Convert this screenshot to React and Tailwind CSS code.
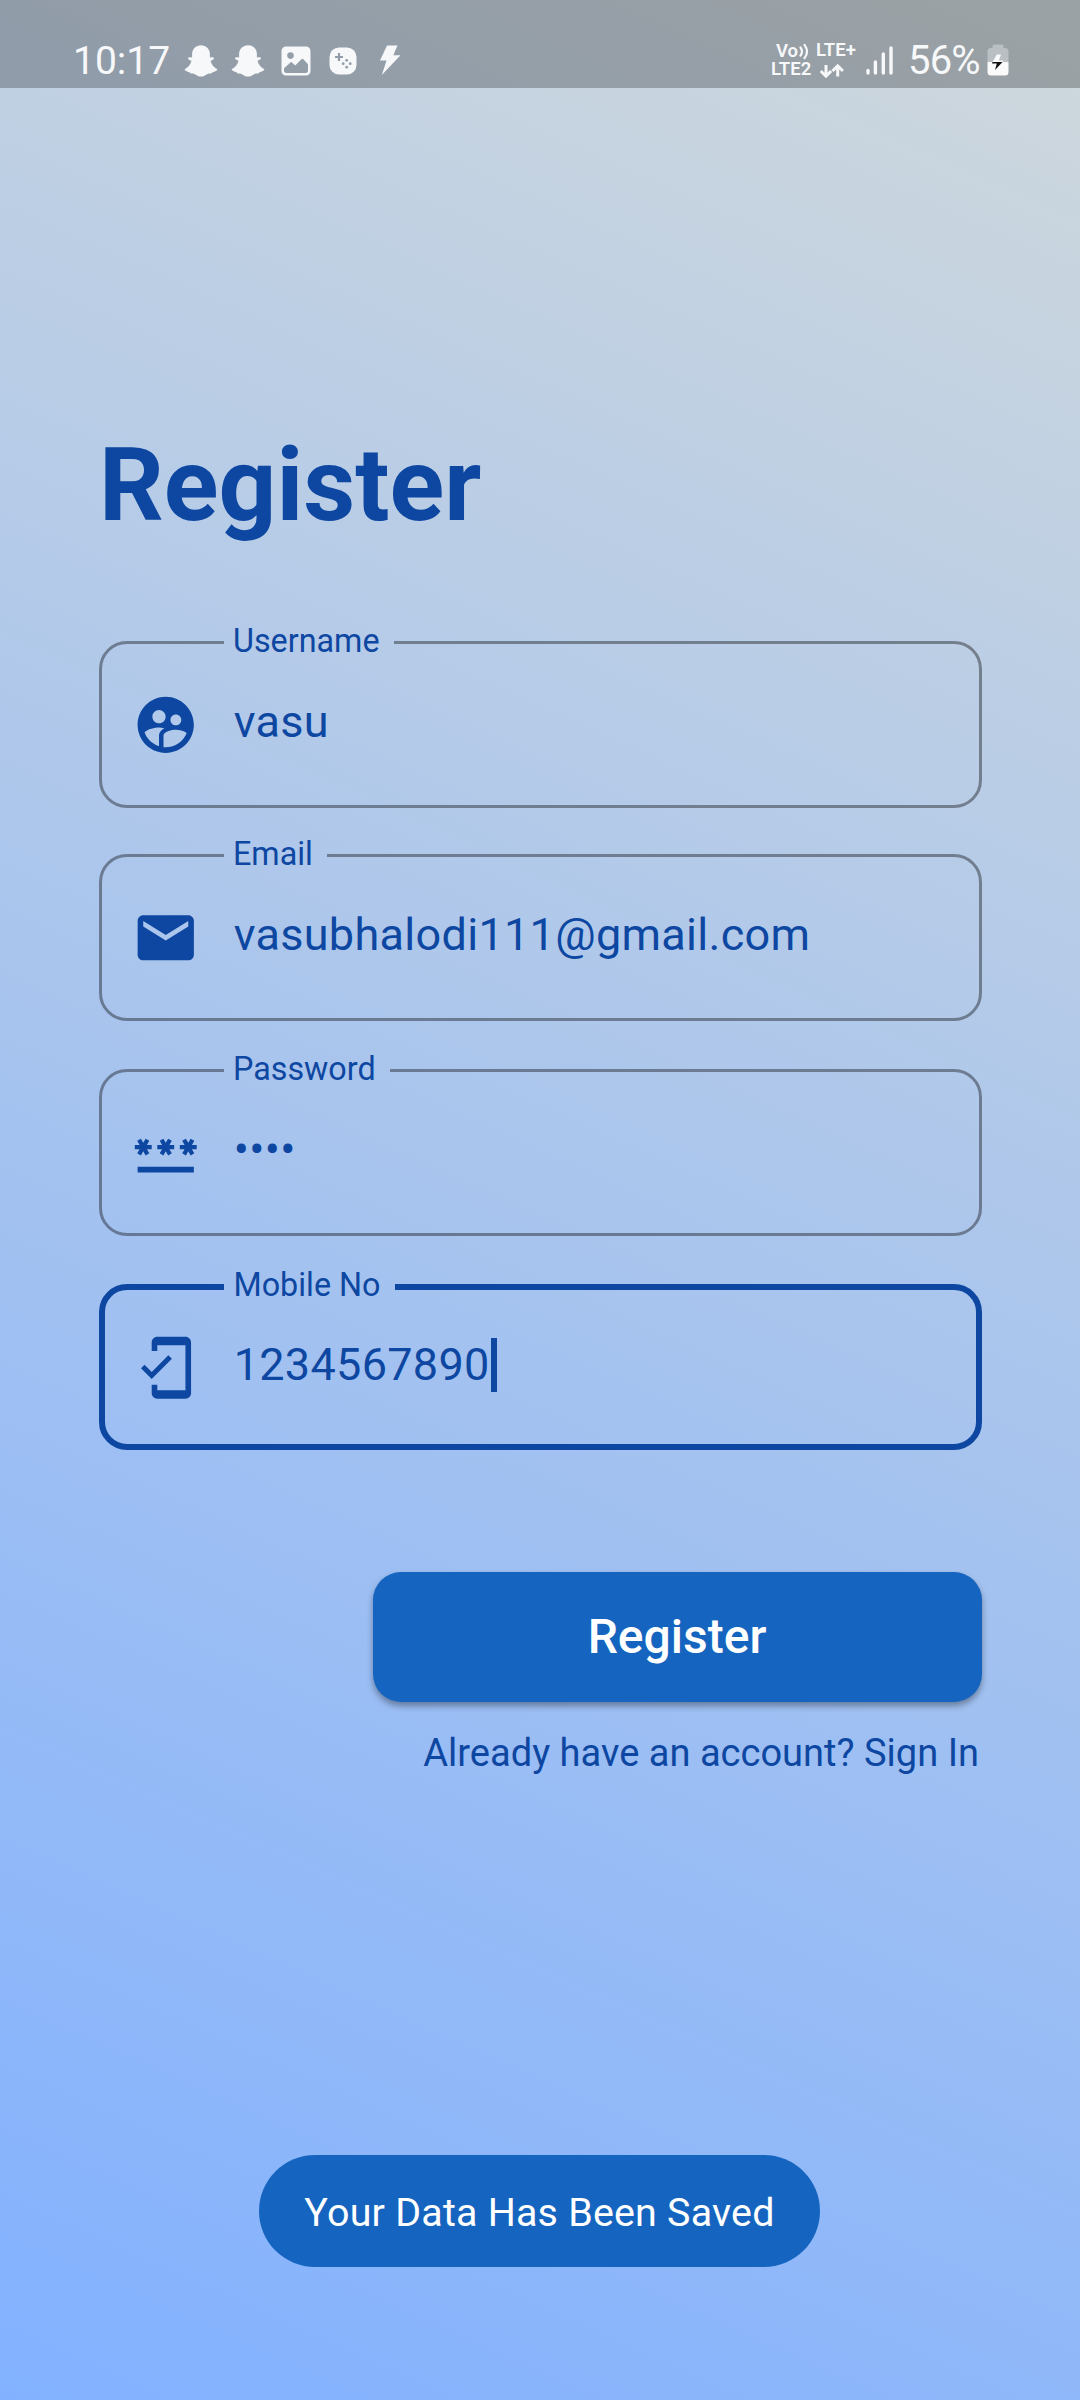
import { MdSupervisedUserCircle, MdEmail, MdPassword, MdMobileFriendly } from "react-icons/md";

function Ghost() {
  return (
    <svg viewBox="0 0 34 33" className="h-[33px] w-[34px] shrink-0" fill="currentColor">
      <path d="M17 0.300c5 0 8.900 3.600 8.900 8.700v3.500c1.500-.2 3.400-.4 4 .4.500 1.400-2 2.300-3.400 2.900 1 3.800 3.700 7.100 6.800 8.400.5 1-2.500 2.400-4.700 3-.6.200-.6 1.100-1.600 1.300-1.300.1-2.500-.1-3.900.7-1.700 1.100-3.200 2.400-6.100 2.400s-4.400-1.300-6.100-2.400c-1.400-.8-2.600-.6-3.900-.7-1-.2-1-1.100-1.600-1.300-2.200-.6-5.200-2-4.700-3 3.100-1.300 5.800-4.600 6.800-8.400-1.400-.6-3.900-1.500-3.400-2.900.6-.8 2.500-.6 4-.4V9C8.100 3.900 12 .3 17 .3z" />
    </svg>
  );
}

function Picture() {
  return (
    <svg viewBox="0 0 30 30" className="h-[30px] w-[30px] shrink-0" fill="currentColor" fillRule="evenodd">
      <path d="M5 0.500h20a4.500 4.500 0 0 1 4.500 4.500v20a4.500 4.500 0 0 1-4.500 4.500H5A4.500 4.500 0 0 1 .5 25V5A4.500 4.500 0 0 1 5 .5zM9.500 6.300a3.300 3.300 0 1 0 0 6.600 3.300 3.300 0 0 0 0-6.600zM3 22.300v2.200A2.500 2.500 0 0 0 5.500 27h19a2.500 2.500 0 0 0 2.500-2.500v-6.300l-4.600-4.900c-.7-.7-1.300-.7-2 0l-6.200 6.200-3-2.800c-.7-.6-1.300-.6-2 0z" />
    </svg>
  );
}

function GamePad() {
  return (
    <svg viewBox="0 0 28 28" className="h-[28px] w-[28px] shrink-0">
      <rect x="0.500" y="0.500" width="27" height="27" rx="9.500" fill="currentColor" />
      <path d="M10 6v8M6 10h8" stroke="#929da9" strokeWidth="2.200" />
      <g fill="#929da9">
        <circle cx="17.700" cy="13.300" r="1.400" />
        <circle cx="17.700" cy="20.200" r="1.400" />
        <circle cx="14.200" cy="16.700" r="1.400" />
        <circle cx="21.200" cy="16.700" r="1.400" />
      </g>
    </svg>
  );
}

function Bolt() {
  return (
    <svg viewBox="0 0 22 31" className="h-[31px] w-[22px] shrink-0" fill="currentColor">
      <path d="M7 0.500h10.500L13.300 10.300H20.500L1.800 30l4.700-14.500H0z" />
    </svg>
  );
}

function DataArrows() {
  return (
    <svg viewBox="0 0 26 16" className="h-[16px] w-[26px]" fill="none" stroke="currentColor" strokeWidth="3">
      <path d="M7 2v11M1.800 8l5.200 5.200L12.200 8M18.700 13.500V3M13.500 8l5.200-5.200L23.900 8" />
    </svg>
  );
}

function VoWaves() {
  return (
    <svg viewBox="0 0 12 17" className="h-[17px] w-[12px]" fill="none" stroke="currentColor" strokeWidth="2.200" strokeLinecap="round">
      <path d="M2.500 4.500q3 4 0 8M6.500 1.800q5 6.700 0 13.400" />
    </svg>
  );
}

function Signal() {
  return (
    <svg viewBox="0 0 28 30" className="h-[30px] w-[28px] shrink-0" stroke="currentColor" strokeWidth="3.400" strokeLinecap="round">
      <path d="M2 24.500V27M9.400 16V27M17.300 8V27M25 1.900V27" />
    </svg>
  );
}

function Battery() {
  return (
    <svg viewBox="0 0 22 32" className="h-[32px] w-[22px] shrink-0">
      <path d="M7 0.500h8a1.500 1.500 0 0 1 1.500 1.500v2H18a3.500 3.500 0 0 1 3.500 3.500V18H.5V7.500A3.500 3.500 0 0 1 4 4h1.500V2A1.500 1.500 0 0 1 7 .5z" fill="#b9bfc3" />
      <path d="M.5 18h21v10a3.500 3.500 0 0 1-3.500 3.500H4A3.500 3.500 0 0 1 .5 28z" fill="#fafafa" />
      <path d="M9.800 10.500H14L11.800 16.500H16.500L15.500 18H5.500z" fill="#fafafa" />
      <path d="M5.500 18h10L8 26l1.800-6.500H5z" fill="#111" />
    </svg>
  );
}

function StatusBar() {
  return (
    <header className="flex h-[88px] items-start bg-black/25 pl-[73px] text-[#f7f8fa]">
      <div className="mt-[41px] w-[111px] whitespace-nowrap text-[39px] leading-[40px]">10:17</div>
      <div className="mt-[45px] flex items-start">
        <Ghost />
        <div className="ml-[13px]"><Ghost /></div>
        <div className="ml-[15.500px] mt-px"><Picture /></div>
        <div className="ml-[18.500px] mt-[2px]"><GamePad /></div>
        <div className="ml-[23px]"><Bolt /></div>
      </div>
      <div className="ml-auto mr-[71px] mt-[44px] flex items-start">
        <div className="-mt-px w-[45px] text-[18.500px] font-semibold leading-[17.500px]">
          <div className="flex pl-[5px]">Vo<VoWaves /></div>
          <div>LTE2</div>
        </div>
        <div className="-mt-[2px] w-[50px] text-[18.500px] font-semibold leading-[17.500px]">
          <div>LTE+</div>
          <div className="mt-[3px] pl-[3px]"><DataArrows /></div>
        </div>
        <div className="mt-[2px]"><Signal /></div>
        <div className="-mt-[3px] ml-[14px] w-[79px] whitespace-nowrap text-[40px] leading-[40px] tracking-[-0.800px]">56%</div>
        <Battery />
      </div>
    </header>
  );
}

function Field({ label, icon: Icon, focused, className = "", children }) {
  return (
    <fieldset
      className={
        (focused ? "h-[182px] border-[6px] border-[#0d47a1] pl-[27.200px] " : "h-[184px] border-[3px] border-black/38 pl-[30.200px] ") +
        "rounded-[28px] " + className
      }
    >
      <legend
        className={
          (focused ? "ml-[92px] pb-[4px] " : "ml-[91.500px] pb-[3px] ") +
          "pl-[9.300px] pr-[14.300px] text-[32.300px] leading-[34px]"
        }
      >
        {label}
      </legend>
      <div className={(focused ? "mt-[28px] " : "mt-[30px] ") + "flex items-center"}>
        <Icon className="size-[67.500px] shrink-0" />
        {children}
      </div>
    </fieldset>
  );
}

const value = "ml-[34px] -mt-[6px] text-[45px] leading-[53px] tracking-[0.300px]";

export default function App() {
  return (
    <div className="flex h-[2400px] w-[1080px] flex-col overflow-hidden bg-[linear-gradient(204.230deg,#cfd8dc,#82b1ff)] font-['Roboto',sans-serif] text-[#0d47a1]">
      <StatusBar />
      <main className="flex flex-col pl-[99px] pr-[98px]">
        <h1 className="mt-[338px] text-[101.250px] font-bold leading-[119px]">Register</h1>
        <form className="mt-[79px] flex flex-col">
          <Field label="Username" icon={MdSupervisedUserCircle}>
            <span className={value}>vasu</span>
          </Field>
          <Field label="Email" icon={MdEmail} className="mt-[29px]">
            <span className={value}>vasubhalodi111@gmail.com</span>
          </Field>
          <Field label="Password" icon={MdPassword} className="mt-[31px]">
            <span className={value}>••••</span>
          </Field>
          <Field label="Mobile No" icon={MdMobileFriendly} focused className="mt-[32px]">
            <span className={value}>1234567890</span>
            <span className="-mt-[6px] ml-px h-[54px] w-[6px] bg-[#0d47a1]" />
          </Field>
          <button type="button" className="mt-[122px] h-[130px] w-[609px] self-end rounded-[28px] bg-[#1565c0] pr-px text-[48px] font-medium text-white shadow-[0_4px_6px_rgba(0,0,0,0.350)]">
            Register
          </button>
          <p className="mt-[28px] mr-[3px] self-end text-[38.050px] leading-[46px]">Already have an account? Sign In</p>
        </form>
      </main>
      <div className="mt-auto mr-px mb-[133px] flex h-[112px] w-[561px] items-center justify-center self-center rounded-full bg-[#1565c0] pt-[4px] text-[39.400px] tracking-[0.220px] text-white">
        Your Data Has Been Saved
      </div>
    </div>
  );
}
